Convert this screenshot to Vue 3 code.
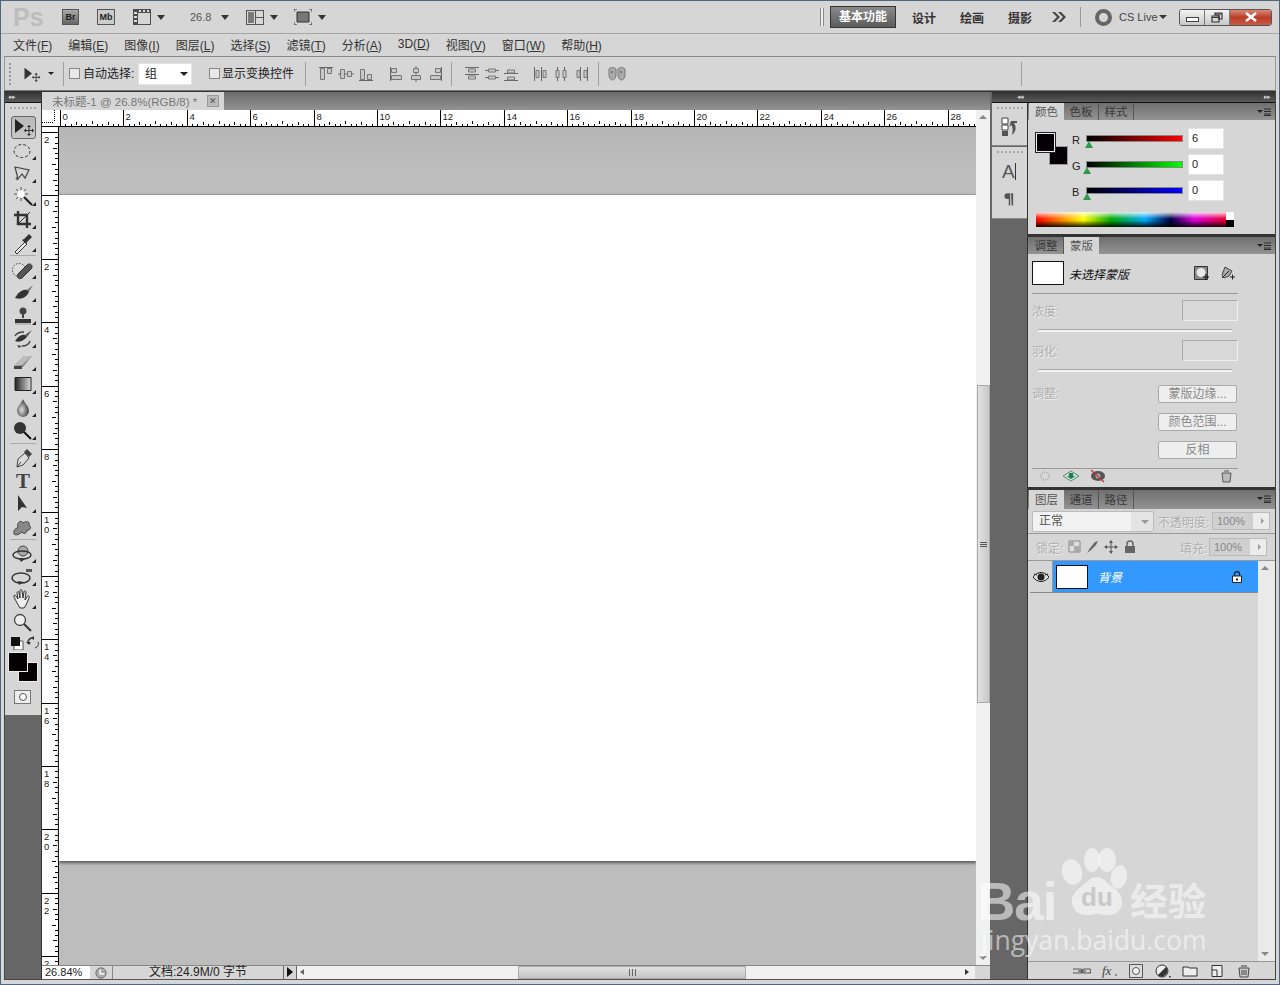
<template>
  <div class="app">
    <!-- title bar -->
    <div class="titlebar">
      <div class="tb-left">
        <span class="ps-logo">Ps</span>
        <span class="br-badge">Br</span>
        <span class="mb-badge">Mb</span>
        <svg width="18" height="16" viewBox="0 0 18 16" v-html="icons.film"></svg>
        <i class="down-arrow"></i>
        <span class="zoom-val">26.8</span>
        <i class="down-arrow"></i>
        <svg width="18" height="15" viewBox="0 0 18 15" v-html="icons.arrange"></svg>
        <i class="down-arrow"></i>
        <svg width="18" height="16" viewBox="0 0 18 16" v-html="icons.screen"></svg>
        <i class="down-arrow"></i>
      </div>
      <div class="tb-right">
        <span class="tb-grip"></span>
        <span class="ws-active">基本功能</span>
        <span class="ws-item">设计</span>
        <span class="ws-item">绘画</span>
        <span class="ws-item">摄影</span>
        <svg width="15" height="12" viewBox="0 0 15 12" v-html="icons.more"></svg>
        <span class="tb-sep"></span>
        <span class="cs-ring"></span>
        <span class="cs-text">CS Live</span>
        <i class="cs-arrow"></i>
        <div class="win-btns">
          <span class="win-btn min"><i></i></span>
          <span class="win-btn restore">
            <svg width="12" height="11" viewBox="0 0 12 11" v-html="icons.restore"></svg>
          </span>
          <span class="win-btn close">
            <svg width="12" height="10" viewBox="0 0 12 10"><path d="M1 1l10 8M11 1L1 9" stroke="#fff" stroke-width="2.6" /></svg>
          </span>
        </div>
      </div>
    </div>

    <!-- menu -->
    <div class="menubar">
      <span v-for="m in menus" :key="m.name">{{ m.name }}(<u>{{ m.key }}</u>)</span>
    </div>

    <!-- options -->
    <div class="optionsbar">
      <span class="opt-grip"></span>
      <svg width="20" height="16" viewBox="0 0 24 19" v-html="icons.move"></svg>
      <i class="small-arrow"></i>
      <span class="opt-sep"></span>
      <span class="check"></span>
      <span class="opt-text">自动选择:</span>
      <span class="opt-select">组<i class="small-arrow dark"></i></span>
      <span class="check"></span>
      <span class="opt-text">显示变换控件</span>
      <span class="opt-sep"></span>
      <svg v-for="(a, i) in alignA" :key="'a' + i" width="16" height="16" viewBox="0 0 16 16" v-html="a"></svg>
      <span class="opt-sep"></span>
      <svg v-for="(a, i) in alignB" :key="'b' + i" width="16" height="16" viewBox="0 0 16 16" v-html="a"></svg>
      <span class="opt-sep"></span>
      <svg width="18" height="16" viewBox="0 0 18 16" v-html="icons.faces"></svg>
      <span class="opt-sep"></span>
    </div>

    <div class="main">
      <!-- tools -->
      <div class="toolcol">
        <div class="dock-head"><span class="dock-arrows">▸▸</span></div>
        <div class="toolbox">
          <div class="tool-grip"></div>
          <template v-for="(t, i) in tools" :key="i">
            <div v-if="t === '-'" class="tool-sep"></div>
            <div v-else class="tool" :class="{ active: t.active, fly: t.fly }">
              <svg width="24" height="22" viewBox="0 0 24 22" v-html="t.svg"></svg>
            </div>
          </template>
          <div class="mini-colors">
            <svg width="32" height="14" viewBox="0 0 32 14" v-html="icons.miniColors"></svg>
          </div>
          <div class="big-colors">
            <span class="big-bg"></span>
            <span class="big-fg"></span>
          </div>
          <div class="quickmask"><span></span></div>
        </div>
        <div class="tool-empty"></div>
      </div>

      <!-- document -->
      <div class="doc">
        <div class="doc-tabs">
          <div class="doc-tab">
            <span>未标题-1 @ 26.8%(RGB/8) *</span>
            <span class="tab-close">✕</span>
          </div>
        </div>
        <div class="ruler-row">
          <svg class="ruler-corner" width="18" height="17" viewBox="0 0 18 17">
            <path d="M0 12.5h12M12.5 0v12" stroke="#000" stroke-dasharray="1 1" fill="none" />
            <path d="M0 16.5h18" stroke="#000" />
          </svg>
          <svg class="ruler-top" width="916" height="17" viewBox="0 0 916 17">
            <path :d="topTicks" stroke="#000" fill="none" shape-rendering="crispEdges" />
            <text v-for="n in topLabels" :key="n.v" :x="n.x + 2" y="10" class="ruler-num">{{ n.v }}</text>
          </svg>
          <div class="ruler-scroll"><i class="arr-up"></i></div>
        </div>
        <div class="doc-mid">
          <svg class="ruler-left" width="17" height="838" viewBox="0 0 17 838">
            <path :d="leftTicks" stroke="#000" fill="none" shape-rendering="crispEdges" />
            <template v-for="n in leftLabels" :key="n.y">
              <text v-for="(d, k) in n.v" :key="k" x="2" :y="n.y + 10 + k * 10" class="ruler-num">{{ d }}</text>
            </template>
          </svg>
          <div class="canvas-wrap">
            <div class="canvas"></div>
          </div>
          <div class="vscroll">
            <div class="vthumb"><span></span></div>
            <i class="arr-down"></i>
          </div>
        </div>
        <div class="statusbar">
          <span class="st-zoom">26.84%</span>
          <span class="st-icon"><svg width="14" height="14" viewBox="0 0 14 14" v-html="icons.stClock"></svg></span>
          <span class="st-text">文档:24.9M/0 字节</span>
          <span class="st-arrow"></span>
          <div class="hscroll">
            <i class="arr-left"></i>
            <div class="hthumb"><span></span></div>
            <i class="arr-right"></i>
          </div>
        </div>
      </div>

      <!-- right dock -->
      <div class="rightdock">
        <div class="dock-head right">
          <span class="dock-arrows">◂◂</span>
          <span class="dock-arrows">▸▸</span>
        </div>
        <div class="dock-body">
          <div class="iconcol">
            <div class="ic-sec first">
              <div class="ic-grip"></div>
              <svg width="20" height="20" viewBox="0 0 20 20" v-html="icons.history"></svg>
            </div>
            <div class="ic-sec second">
              <div class="ic-grip"></div>
              <svg width="20" height="24" viewBox="0 0 20 24" v-html="icons.charA"></svg>
              <svg width="15" height="16" viewBox="0 0 20 22" v-html="icons.para"></svg>
            </div>
          </div>
          <div class="panels">
            <!-- colour -->
            <div class="ptabs">
              <span class="ptab active">颜色</span><span class="ptab">色板</span><span class="ptab">样式</span>
              <svg class="pmenu" width="14" height="8" viewBox="0 0 14 8" v-html="icons.pmenu"></svg>
            </div>
            <div class="color-body">
              <div class="color-grid">
                <div class="swatches">
                  <span class="sw-bg"></span>
                  <span class="sw-fg"></span>
                </div>
                <div class="color-rows">
                  <div v-for="c in channels" :key="c.l" class="color-row">
                    <span class="c-label">{{ c.l }}</span>
                    <div class="c-slider" :class="c.cls">
                      <i class="c-thumb" :style="{ left: c.thumb + 'px' }"></i>
                    </div>
                    <span class="c-input">{{ c.v }}</span>
                  </div>
                </div>
              </div>
              <div class="spectrum"><div class="spectrum-bw"></div></div>
            </div>
            <div class="psep"></div>

            <!-- masks -->
            <div class="ptabs">
              <span class="ptab">调整</span><span class="ptab active">蒙版</span>
              <svg class="pmenu" width="14" height="8" viewBox="0 0 14 8" v-html="icons.pmenu"></svg>
            </div>
            <div class="mask-body">
              <div class="mask-top">
                <span class="mask-thumb"></span>
                <span class="mask-title">未选择蒙版</span>
                <svg class="mask-ic1" width="15" height="15" viewBox="0 0 15 15" v-html="icons.maskPixel"></svg>
                <svg class="mask-ic2" width="15" height="15" viewBox="0 0 15 15" v-html="icons.maskVector"></svg>
              </div>
              <div class="mask-line"></div>
              <div class="mask-row"><span class="ghost">浓度:</span><span class="mask-input"></span></div>
              <div class="mask-track"></div>
              <div class="mask-row second"><span class="ghost">羽化:</span><span class="mask-input"></span></div>
              <div class="mask-track"></div>
              <div class="mask-btn-row first"><span class="ghost raised">调整:</span><span class="mask-btn">蒙版边缘...</span></div>
              <div class="mask-btn-row"><span class="mask-btn">颜色范围...</span></div>
              <div class="mask-btn-row"><span class="mask-btn">反相</span></div>
              <div class="mask-line bottom"></div>
              <div class="mask-foot">
                <svg width="206" height="16" viewBox="0 0 206 16" v-html="icons.maskFoot"></svg>
              </div>
            </div>
            <div class="psep"></div>

            <!-- layers -->
            <div class="ptabs tall">
              <span class="ptab active">图层</span><span class="ptab">通道</span><span class="ptab">路径</span>
              <svg class="pmenu" width="14" height="8" viewBox="0 0 14 8" v-html="icons.pmenu"></svg>
            </div>
            <div class="layers-body">
              <div class="ly-row one">
                <span class="blend">正常<i class="blend-arrow"></i></span>
                <span class="ghost ly-label">不透明度:</span>
                <span class="pct">100%<i></i></span>
              </div>
              <div class="ly-row two">
                <span class="ghost lock-label">锁定:</span>
                <svg class="lock-icons" width="70" height="14" viewBox="0 0 70 14" v-html="icons.lockRow"></svg>
                <span class="ghost fill-label">填充:</span>
                <span class="pct">100%<i></i></span>
              </div>
              <div class="ly-list">
                <div class="ly-items">
                  <div class="ly-item">
                    <span class="eye">
                      <svg width="16" height="12" viewBox="0 0 16 12" v-html="icons.eye"></svg>
                    </span>
                    <div class="ly-sel">
                      <span class="ly-thumb"></span>
                      <span class="ly-name">背景</span>
                      <svg class="ly-lock" width="10" height="12" viewBox="0 0 10 12" v-html="icons.lock"></svg>
                    </div>
                  </div>
                </div>
                <div class="ly-scroll"><i class="arr-up"></i><i class="arr-down"></i></div>
              </div>
              <div class="ly-foot">
                <svg v-for="(f, i) in layerFoot" :key="i" width="18" height="14" viewBox="0 0 18 14" v-html="f"></svg>
              </div>
            </div>
          </div>
        </div>
      </div>
    </div>

    <!-- watermark sits over the panels -->
    <div class="watermark">
      <div class="wm-top">
        <span class="wm-bai">Bai</span>
        <svg class="wm-paw" width="70" height="78" viewBox="0 0 70 78">
          <ellipse cx="12" cy="26" rx="10" ry="13" transform="rotate(-15 12 26)" />
          <ellipse cx="32" cy="14" rx="8" ry="12" />
          <ellipse cx="47" cy="14" rx="9" ry="12" />
          <ellipse cx="59" cy="31" rx="8" ry="12" transform="rotate(12 59 31)" />
          <path d="M37 31c6 0 8 4 13 8 7 5 12 9 12 17 0 9-7 14-16 13-4 0-8-2-11-1-8 2-21 2-23-11-1-7 3-12 9-16 6-4 8-10 16-10z" />
          <text x="37" y="60" class="wm-du">du</text>
        </svg>
        <span class="wm-cn">经验</span>
      </div>
      <div class="wm-url">jingyan.baidu.com</div>
    </div>
  </div>
</template>

<script setup>
const menus = [
  { name: "文件", key: "F" },
  { name: "编辑", key: "E" },
  { name: "图像", key: "I" },
  { name: "图层", key: "L" },
  { name: "选择", key: "S" },
  { name: "滤镜", key: "T" },
  { name: "分析", key: "A" },
  { name: "3D", key: "D" },
  { name: "视图", key: "V" },
  { name: "窗口", key: "W" },
  { name: "帮助", key: "H" },
];

const icons = {
  film: '<path d="M0 0h18v16H0z" fill="#4d4d4d"/><path d="M5 4h12v11H5z" fill="#d6d6d6"/><path d="M1 3h3v2H1zM1 7h3v2H1zM1 11h3v2H1zM6 1h2v2H6zM10 1h2v2h-2zM14 1h2v2h-2z" fill="#ddd"/>',
  arrange: '<path d="M0 0h18v15H0z" fill="#555"/><path d="M1 1h8v13H1zM10 1h7v6h-7zM10 8h7v6h-7z" fill="#d8d8d8"/><path d="M2 2h6v11H2z" fill="#7a7a7a"/>',
  screen: '<path d="M3 3h12v10H3z" fill="#777" stroke="#333"/><path d="M0 3V0h3M15 0h3v3M18 13v3h-3M3 16H0v-3" fill="none" stroke="#333"/>',
  more: '<path d="M1 1l5 5-5 5h3l5-5-5-5zM7 1l5 5-5 5h3l5-5-5-5z" fill="#444"/>',
  restore: '<path d="M4 1h7v6H8V3H4z" fill="none" stroke="#333" stroke-width="1.2"/><path d="M1 4h7v6H1z" fill="none" stroke="#333" stroke-width="1.2"/><path d="M1 5.5h7M4 2h7" stroke="#333"/>',
  move: '<path d="M3 2v14l9-7z" fill="#333"/><path d="M17 9v9M13 13.5h8" stroke="#333"/><path d="M17 8l-2 2h4zM17 19l-2-2h4zM12 13.5l2-2v4zM22 13.5l-2-2v4z" fill="#333"/>',
  faces: '<path d="M1 3c2-2 5-2 7 0v6c0 3-2 5-3.500 5S1 12 1 9zM10 3c2-2 5-2 7 0v6c0 3-2 5-3.500 5S10 12 10 9z" fill="#aaa" stroke="#777"/><path d="M3 6h2M12 6h2" stroke="#444"/>',
  miniColors: '<path d="M6 5h9v9H6z" fill="#fff" stroke="#555"/><path d="M3 1h9v9H3z" fill="#111"/><path d="M25 2c-3 0-5 2-5 5" fill="none" stroke="#333" stroke-width="1.500"/><path d="M21 9l-3-3h5z" fill="#333"/><path d="M27 12c3-1 4-4 3-6" fill="none" stroke="#333"/><path d="M23 2l3-2v4z" fill="#333"/>',
  stClock: '<circle cx="7" cy="7" r="6" fill="#aaa" stroke="#666"/><path d="M7 3v4h4v2H5V3z" fill="#eee"/>',
  history: '<path d="M2 2h6v6H2z" fill="#fff" stroke="#444"/><path d="M2 9h6v5H2z" fill="#fff" stroke="#444"/><path d="M2 15h6v5H2z" fill="#555"/><path d="M11 5h6v2h-3c2 3 3 8-2 12 1-5 1-8-1-10l-2 2z" fill="#555"/>',
  charA: '<text x="2" y="19" font-size="19" fill="#555" font-family="Liberation Sans">A</text><path d="M15.500 4v17" stroke="#333"/>',
  para: '<path d="M9 3H7a4 4 0 0 0 0 8h2v9h2V3zM12 3h3v17h-2z" fill="#555"/>',
  pmenu: '<path d="M0 2h6L3 5z" fill="#222"/><path d="M7 1h7M7 3.500h7M7 6h7M7 7.500h7" stroke="#222" stroke-width=".9"/>',
  maskPixel: '<path d="M.5.500h13v13H.5z" fill="#888" stroke="#333"/><circle cx="7" cy="6.500" r="4.500" fill="#e8e8e8"/><path d="M9 11h6M12 8v6" stroke="#111"/>',
  maskVector: '<path d="M5 1l-3 8 2 3 5-2 3-5z" fill="#aaa" stroke="#444"/><path d="M2 12L9 5" stroke="#222"/><path d="M10 11h5M12.500 8.500v5" stroke="#222"/>',
  maskFoot: '<circle cx="13" cy="7" r="4" fill="none" stroke="#777" stroke-dasharray="1 1.500"/><path d="M31 7l8-5 8 5-8 5z" fill="#bfe0cf" stroke="#6c8c7c"/><path d="M37 4h4v3h2l-4 3-4-3h2z" fill="#1d7a56"/><ellipse cx="66" cy="7" rx="7" ry="5" fill="#555"/><circle cx="66" cy="7" r="2.500" fill="#aaa"/><path d="M59 1l13 12" stroke="#c33" stroke-width="1.200"/><path d="M190 4h9l-1 9h-7zM192 2h5" fill="#bbb" stroke="#555"/>',
  lockRow: '<path d="M1 1h11v11H1z" fill="#ddd" stroke="#888"/><path d="M1 1h5v5H1zM6 6h6v6H6z" fill="#aaa"/><path d="M19 13l3-5 5-6 3-1-2 4-5 5z" fill="#666"/><path d="M43 1v12M37 7h12" stroke="#555"/><path d="M43 0l-2 3h4zM43 14l-2-3h4zM36 7l3-2v4zM50 7l-3-2v4z" fill="#555"/><path d="M57 6h10v7H57z" fill="#666"/><path d="M59 6V4a3 3 0 0 1 6 0v2" fill="none" stroke="#666" stroke-width="1.500"/>',
  eye: '<path d="M0 6c4-6 12-6 16 0-4 6-12 6-16 0z" fill="#ddd" stroke="#222"/><circle cx="8" cy="6" r="3.500" fill="#222"/><path d="M1 3l3 1M15 3l-3 1" stroke="#222"/>',
  lock: '<path d="M.5 5h9v6.500h-9z" fill="#fff" stroke="#222"/><path d="M2.500 5V3a2.500 2.500 0 0 1 5 0v2" fill="none" stroke="#222" stroke-width="1.300"/><path d="M4 7.500h2v2H4z" fill="#222"/>',
};

const bar = (d) => `<path d="${d}" fill="#c8c8c8" stroke="#777"/>`;
const line = (d) => `<path d="${d}" stroke="#666" fill="none"/>`;
const alignA = [
  line("M1 1.500h14") + bar("M2.500 2.500h4v11h-4zM9.500 2.500h4v5h-4z"),
  line("M0 8h16") + bar("M2.500 3.500h4v9h-4zM9.500 5.500h4v5h-4z"),
  line("M1 14.500h14") + bar("M2.500 3.500h4v10h-4zM9.500 8.500h4v5h-4z"),
  line("M2.500 1v14") + bar("M3.500 2.500h5v4h-5zM3.500 9.500h10v4h-10z"),
  line("M8 0v16") + bar("M5.500 2.500h5v4h-5zM3.500 9.500h9v4h-9z"),
  line("M13.500 1v14") + bar("M7.500 2.500h5v4h-5zM2.500 9.500h10v4h-10z"),
];
const alignB = [
  line("M1 1.500h14M1 8.500h14") + bar("M4.500 3h7v3h-7zM4.500 10h7v3h-7z"),
  line("M1 4.500h14M1 11.500h14") + bar("M4.500 3h7v3h-7zM4.500 10h7v3h-7z"),
  line("M1 7.500h14M1 14.500h14") + bar("M4.500 4h7v3h-7zM4.500 11h7v3h-7z"),
  line("M1.500 1v14M8.500 1v14") + bar("M3 4.500h3v7H3zM10 4.500h3v7h-3z"),
  line("M4.500 1v14M11.500 1v14") + bar("M3 4.500h3v7H3zM10 4.500h3v7h-3z"),
  line("M7.500 1v14M14.500 1v14") + bar("M4 4.500h3v7H4zM11 4.500h3v7h-3z"),
];

const layerFoot = [
  '<path d="M1 5h6a2 2 0 0 1 0 4H1a2 2 0 0 1 0-4zM11 5h5a2 2 0 0 1 0 4h-5a2 2 0 0 1 0-4z" fill="none" stroke="#555" stroke-width="1.200"/><path d="M5 7h8" stroke="#555" stroke-width="1.200"/>',
  '<text x="2" y="11" font-size="13" font-style="italic" font-family="Liberation Serif" fill="#444">fx</text><path d="M15 11h2" stroke="#444"/>',
  '<path d="M2.500 .5h13v13h-13z" fill="#ddd" stroke="#555"/><circle cx="9" cy="7" r="3.500" fill="#fff" stroke="#555"/>',
  '<circle cx="8" cy="7" r="6" fill="#eee" stroke="#333"/><path d="M12.200 2.800A6 6 0 0 1 3.800 11.200z" fill="#333"/><path d="M15 12l2 0-1 2z" fill="#222"/>',
  '<path d="M2 3h5l1 1h8v8H2z" fill="#eee" stroke="#333"/>',
  '<path d="M4 1.500h10v11H4z" fill="#eee" stroke="#333"/><path d="M4 6h5v6" fill="none" stroke="#333"/>',
  '<path d="M4 4h10l-1 9H5zM6 2h6" fill="#ccc" stroke="#444"/><path d="M7 6v5M9 6v5M11 6v5" stroke="#444"/>',
];

const t = (svg, fly = true, active = false) => ({ svg, fly, active });
const tools = [
  t(icons.move.replace(/fill="#333"/g, 'fill="#222"'), false, true),
  t('<ellipse cx="11" cy="11" rx="8" ry="6.500" fill="none" stroke="#333" stroke-dasharray="3 2"/>'),
  t('<path d="M4 4l14 3-4 8-3-4-4 5z" fill="none" stroke="#444" stroke-width="1.200"/><path d="M6 14c-2 2 0 4 1 2" fill="none" stroke="#444"/>'),
  t('<circle cx="10" cy="8" r="3.500" fill="#fff"/><path d="M10 1v3M10 12v3M3 8h3M14 8h3M5 3l2 2M15 3l-2 2M5 13l2-2" stroke="#555"/><path d="M13 11l8 8" stroke="#222" stroke-width="2.200"/>'),
  t('<path d="M7 2v13h13M3 6h13v13" fill="none" stroke="#333" stroke-width="2.400"/><path d="M7 15L19 3" stroke="#333"/>'),
  t('<path d="M4 20l10-10 2 2-10 10z" fill="#eee" stroke="#333"/><path d="M13 7l5-5 3 3-5 5-1 2-4-4z" fill="#333"/>'),
  "-",
  t('<circle cx="8" cy="11" r="6.500" fill="#ddd" stroke="#444" stroke-dasharray="1.500 1.500"/><path d="M7 15l9-9c3-3 7 1 4 4l-9 9c-3 2-6-1-4-4z" fill="#555" stroke="#333"/>'),
  t('<path d="M16 8l6-5-4 7z" fill="#777"/><path d="M16 8c-5-1-9 3-12 8 6 2 11 0 14-6z" fill="#333"/>'),
  t('<circle cx="12" cy="6" r="3.500" fill="#444"/><path d="M11 8h2v5h-2z" fill="#444"/><path d="M4 14h16v4H4z" fill="#333"/><path d="M4 19h16" stroke="#999"/>'),
  t('<path d="M14 7l7-5-5 7z" fill="#555"/><path d="M14 7c-4-1-7 2-10 6 4 2 8 0 12-4z" fill="#333"/><path d="M4 8c2-4 6-4 9-4M19 13c-1 3-4 5-8 5" fill="none" stroke="#444" stroke-width="1.400"/><path d="M6 17l5 1-3 2z" fill="#444"/>'),
  t('<path d="M3 15l10-10h8l-9 11H4z" fill="#888"/><path d="M3 15l10-10h8L11 14z" fill="#bbb"/><path d="M3 15h8v3H3z" fill="#444"/>'),
  t('<defs><linearGradient id="tg"><stop offset="0" stop-color="#222"/><stop offset="1" stop-color="#ddd"/></linearGradient></defs><path d="M4 3.500h16v13H4z" fill="url(#tg)" stroke="#222"/>'),
  t('<defs><radialGradient id="td" cx=".4" cy=".6"><stop offset="0" stop-color="#ddd"/><stop offset="1" stop-color="#555"/></radialGradient></defs><path d="M12 2c2 5 6 7 6 12a6 6 0 0 1-12 0c0-5 4-7 6-12z" fill="url(#td)"/>'),
  t('<circle cx="9" cy="8" r="6" fill="#333"/><path d="M13 12l7 7" stroke="#111" stroke-width="2"/>'),
  "-",
  t('<path d="M6 20l1-8 7-6 4 5-6 7z" fill="#ddd" stroke="#444"/><path d="M13 5l3-3 5 5-3 3z" fill="#444"/><path d="M6 20l4-5" stroke="#444"/>'),
  t('<text x="12" y="18" font-size="21" font-weight="bold" text-anchor="middle" font-family="Liberation Serif" fill="#444">T</text>'),
  t('<path d="M7 2v16l4-4 5 1z" fill="#333"/>'),
  t('<path d="M3 18c-1-4 2-6 4-6-2-5 3-9 5-5 3-2 7-2 6 2 3 2 1 6-2 5 0 3-3 5-5 2-2 2-6 4-8 2z" fill="#888" stroke="#444"/>'),
  "-",
  t('<circle cx="12" cy="8" r="5" fill="#aaa" stroke="#444"/><ellipse cx="11" cy="12" rx="9" ry="4" fill="none" stroke="#333" stroke-width="1.400"/><path d="M8 15l6 1-4 3z" fill="#333"/>'),
  t('<ellipse cx="10" cy="12" rx="9" ry="5" fill="none" stroke="#333" stroke-width="1.500"/><path d="M7 15l6 1-5 3z" fill="#333"/><path d="M15 3h6v3h-6z" fill="#555"/>'),
  t('<path d="M5 12L3 8c-1-2 1-2 2-1l2 3-1-6c0-2 2-2 2 0l1 5 0-7c0-2 2-2 2 0l1 7 1-6c0-2 2-1 2 0l-1 8 2-3c1-2 3-1 2 1l-3 7-2 3H9z" fill="#eee" stroke="#333"/>'),
  t('<circle cx="9" cy="8" r="5.500" fill="#eee" stroke="#444" stroke-width="1.300"/><path d="M13 12l7 7" stroke="#333" stroke-width="2"/>', false),
];

const channels = [
  { l: "R", v: "6", cls: "red", thumb: -2 },
  { l: "G", v: "0", cls: "green", thumb: -4 },
  { l: "B", v: "0", cls: "blue", thumb: -4 },
];

// ruler ticks: 2 units = 63.4px, split in 12
const step = 63.4;
let top = "M0 16.500h916";
const topLabels = [];
for (let i = 0; i < 15; i++) {
  const x = Math.round(i * step) + 0.5;
  top += `M${x} 0v17`;
  topLabels.push({ v: i * 2, x });
  for (let k = 1; k < 12; k++) {
    const mx = Math.round((i + k / 12) * step) + 0.5;
    top += `M${mx} ${k === 6 ? 11 : k % 3 === 0 ? 12 : 14}v3`;
  }
}
const topTicks = top;

let left = "M16.500 0v838";
const leftLabels = [];
for (let i = 0; i < 14; i++) {
  const y = Math.round(5 + i * step) + 0.5;
  left += `M0 ${y}h17`;
  const v = i === 0 ? 2 : (i - 1) * 2;
  // the last label runs under the status bar: only its first digit shows
  const digits = String(v).split("");
  leftLabels.push({ v: i === 13 ? digits.slice(0, 1) : digits, y });
  for (let k = 1; k < 12; k++) {
    const my = Math.round(5 + (i + k / 12) * step) + 0.5;
    if (my < 838) left += `M${k === 6 ? 10 : k % 3 === 0 ? 11 : 13} ${my}h4`;
  }
}
const leftTicks = left;
</script>

<style>
html,
body {
  margin: 0;
  background: #d6d6d6;
}
</style>

<style scoped>
.app {
  position: relative;
  width: 1280px;
  height: 985px;
  box-sizing: border-box;
  border: 1px solid #50667e;
  background: #d6d6d6;
  display: flex;
  flex-direction: column;
  overflow: hidden;
  font-family: "Liberation Sans", "Noto Sans CJK SC", sans-serif;
  font-size: 12px;
  color: #222;
}
svg {
  display: block;
}

/* title bar */
.titlebar {
  height: 33px;
  box-sizing: border-box;
  flex: none;
  display: flex;
  justify-content: space-between;
  align-items: center;
  padding: 0 7px 0 12px;
  border-bottom: 1px solid #a6a6a6;
}
.tb-left {
  display: grid;
  grid-template-columns: 49px 35px 36px 24px 33px 31px 25px 24px 24px 24px 8px;
  align-items: center;
}
.tb-right {
  display: grid;
  grid-template-columns: 10px 82px 48px 48px 43px 29px 15px 24px 40px 20px 93px;
  align-items: center;
}
.ps-logo {
  font-size: 25px;
  font-weight: bold;
  color: #bdbdbd;
}
.br-badge,
.mb-badge {
  width: 17px;
  height: 16px;
  box-sizing: border-box;
  border: 1px solid #555;
  font-size: 9px;
  font-weight: bold;
  text-align: center;
  line-height: 14px;
}
.br-badge {
  background: linear-gradient(#aaa, #666);
  color: #222;
}
.mb-badge {
  width: 18px;
  background: #ccc;
}
.down-arrow {
  width: 0;
  height: 0;
  border: 4px solid transparent;
  border-top: 5px solid #333;
  border-bottom: 0;
}
.zoom-val {
  color: #555;
  font-size: 11px;
}
.tb-grip {
  width: 4px;
  height: 18px;
  box-sizing: border-box;
  border-left: 1px solid #888;
  border-right: 1px solid #888;
  background: #f2f2f2;
}
.ws-active {
  width: 66px;
  height: 22px;
  box-sizing: border-box;
  border: 1px solid #333;
  background: linear-gradient(#8a8a8a, #5c5c5c);
  color: #fff;
  font-weight: bold;
  line-height: 20px;
  text-align: center;
}
.ws-item {
  font-weight: bold;
  color: #333;
}
.tb-sep {
  width: 1px;
  height: 20px;
  background: #999;
}
.cs-ring {
  width: 17px;
  height: 17px;
  box-sizing: border-box;
  border: 4px solid #666;
  border-radius: 50%;
  background: #d6d6d6;
}
.cs-text {
  font-size: 11px;
  color: #444;
  white-space: nowrap;
}
.cs-arrow {
  width: 0;
  height: 0;
  border: 4px solid transparent;
  border-top: 4px solid #333;
  border-bottom: 0;
}
.win-btns {
  display: flex;
  height: 17px;
  border: 1px solid #555;
  border-radius: 3px;
  overflow: hidden;
  box-sizing: border-box;
}
.win-btn {
  display: flex;
  align-items: center;
  justify-content: center;
  background: linear-gradient(#f4f4f4, #c8c8c8);
  border-right: 1px solid #777;
  box-sizing: border-box;
}
.win-btn.min {
  width: 25px;
}
.win-btn.min i {
  width: 11px;
  height: 3px;
  margin-top: 4px;
  background: #fff;
  border: 1px solid #444;
}
.win-btn.restore {
  width: 25px;
}
.win-btn.close {
  flex: 1;
  border-right: 0;
  background: linear-gradient(#d98878, #bb3d27 50%, #c85a45);
}

/* menu */
.menubar {
  height: 22px;
  box-sizing: border-box;
  flex: none;
  display: flex;
  gap: 16px;
  align-items: center;
  padding: 0 0 2px 12px;
  color: #333;
}

/* options */
.optionsbar {
  height: 35px;
  box-sizing: border-box;
  flex: none;
  margin: 0 3px;
  padding-left: 4px;
  border: 1px solid #999;
  border-top-color: #888;
  border-bottom: 1px solid #777;
  display: grid;
  grid-template-columns: 13px 26px 15px 6px 14px 55px 71px 13px 83px 13px 20px 20px 30px 20px 20px 23px 13px 20px 19px 30px 20px 20px 25px 10px 413px 1px;
  align-items: center;
  color: #222;
}
.opt-grip {
  width: 2px;
  height: 22px;
  border-left: 2px dotted #999;
}
.opt-sep {
  width: 1px;
  height: 24px;
  background: #a0a0a0;
}
.opt-text {
  padding-bottom: 3px;
}
.check {
  width: 9px;
  height: 9px;
  border: 1px solid #888;
  background: #e8e8e8;
}
.small-arrow {
  width: 0;
  height: 0;
  border: 3px solid transparent;
  border-top: 3px solid #222;
  border-bottom: 0;
}
.opt-select {
  width: 54px;
  height: 22px;
  box-sizing: border-box;
  background: #fff;
  border: 1px solid #e4e4e4;
  padding: 1px 0 0 6px;
  line-height: 22px;
  display: flex;
  justify-content: space-between;
  align-items: center;
}
.opt-select .small-arrow.dark {
  margin-right: 3px;
  border-width: 4px;
  border-bottom: 0;
}

/* main */
.main {
  flex: none;
  height: 889px;
  box-sizing: border-box;
  margin: 0 3px;
  border: 1px solid #444;
  border-top-color: #333;
  display: flex;
  background: #666;
}
.dock-head {
  height: 10px;
  background: linear-gradient(#333, #5a5a5a);
  border-bottom: 1px solid #111;
  display: flex;
  align-items: center;
  padding: 0 4px;
}
.dock-head.right {
  justify-content: space-between;
  padding: 0 5px 0 25px;
}
.dock-arrows {
  font-size: 7px;
  color: #ccc;
  letter-spacing: -1px;
  line-height: 10px;
}

/* tools */
.toolcol {
  width: 37px;
  flex: none;
  display: flex;
  flex-direction: column;
  border-right: 1px solid #333;
  box-sizing: border-box;
}
.toolbox {
  height: 612px;
  flex: none;
  background: #d6d6d6;
  display: flex;
  flex-direction: column;
}
.tool-empty {
  flex: 1;
  background: #666;
}
.tool-grip {
  height: 5px;
  margin: 4px 5px;
  border-top: 2px dotted #aaa;
  box-sizing: border-box;
}
.tool {
  position: relative;
  height: 23px;
  flex: none;
  display: flex;
  justify-content: center;
  align-items: center;
}
.tool.active {
  margin: 0 5px 0 6px;
  box-sizing: border-box;
  border: 1px solid #666;
  border-radius: 3px;
  background: linear-gradient(#b8b8b8, #c8c8c8);
}
.tool.active svg {
  flex: none;
}
.tool.fly::after {
  content: "";
  position: absolute;
  right: 5px;
  bottom: 2px;
  border: 2px solid #222;
  border-left-color: transparent;
  border-top-color: transparent;
}
.tool-sep {
  height: 1px;
  margin: 1px 5px 2px;
  background: #aaa;
  flex: none;
}
.mini-colors {
  height: 17px;
  padding: 2px 0 0 3px;
  box-sizing: border-box;
  flex: none;
}
.big-colors {
  position: relative;
  height: 34px;
  flex: none;
}
.big-fg,
.big-bg {
  position: absolute;
  width: 18px;
  height: 18px;
  background: #050103;
  border: 1px solid #eee;
}
.big-fg {
  left: 3px;
  top: 1px;
}
.big-bg {
  left: 13px;
  top: 11px;
}
.quickmask {
  height: 14px;
  margin: 5px 0 0 9px;
  width: 17px;
  box-sizing: border-box;
  border: 1px solid #777;
  background: #eee;
  display: flex;
  align-items: center;
  justify-content: center;
}
.quickmask span {
  width: 8px;
  height: 8px;
  box-sizing: border-box;
  border: 1px solid #555;
  border-radius: 50%;
  background: #fff;
}

/* doc */
.doc {
  width: 948px;
  flex: none;
  display: flex;
  flex-direction: column;
}
.doc-tabs {
  height: 18px;
  flex: none;
  background: linear-gradient(#6b6b6b, #929292);
}
.doc-tab {
  width: 182px;
  height: 18px;
  box-sizing: border-box;
  background: #d6d6d6;
  padding-left: 10px;
  display: flex;
  justify-content: space-between;
  align-items: center;
  color: #777;
  font-size: 11.500px;
  white-space: nowrap;
}
.tab-close {
  width: 12px;
  height: 12px;
  margin-right: 5px;
  border: 1px solid #999;
  background: #bbb;
  color: #555;
  font-size: 9px;
  line-height: 11px;
  text-align: center;
  box-sizing: border-box;
}
.ruler-row {
  height: 17px;
  flex: none;
  display: flex;
  background: #fff;
}
.ruler-corner,
.ruler-top {
  flex: none;
}
.ruler-scroll {
  position: relative;
  flex: 1;
  background: #f0f0f0;
}
.ruler-num {
  font-size: 9.500px;
  font-family: "Liberation Sans", sans-serif;
  fill: #222;
}
.doc-mid {
  height: 838px;
  flex: none;
  display: flex;
}
.ruler-left {
  flex: none;
  background: #fff;
}
.canvas-wrap {
  width: 917px;
  flex: none;
  background: linear-gradient(#b5b5b5, #bdbdbd 40px);
  padding-top: 67px;
  box-sizing: border-box;
}
.canvas {
  height: 667px;
  background: #fff;
  border-top: 1px solid #9a9a9a;
  box-sizing: border-box;
  box-shadow: 0 2px 3px #555;
}
.vscroll {
  width: 14px;
  flex: none;
  background: #f0f0f0;
  position: relative;
  box-sizing: border-box;
  padding-top: 258px;
}
.vthumb {
  margin-left: 1px;
  height: 318px;
  background: linear-gradient(90deg, #e2e2e2, #c8c8c8);
  border: 1px solid #aaa;
  box-sizing: border-box;
  display: flex;
  align-items: center;
  justify-content: center;
}
.vthumb span {
  width: 7px;
  height: 5px;
  border-top: 1px solid #555;
  border-bottom: 1px solid #555;
  box-sizing: border-box;
  background: linear-gradient(transparent 1px, #555 1px, #555 2px, transparent 2px);
}
.arr-up,
.arr-down {
  position: absolute;
  left: 3px;
  width: 0;
  height: 0;
  border: 4px solid transparent;
}
.arr-up {
  top: 5px;
  border-top: 0;
  border-bottom: 4px solid #888;
}
.arr-down {
  bottom: 5px;
  border-bottom: 0;
  border-top: 4px solid #888;
}
.statusbar {
  height: 15px;
  flex: none;
  display: flex;
  background: #d6d6d6;
  box-sizing: border-box;
  border-top: 1px solid #888;
  border-bottom: 1px solid #555;
}
.st-zoom {
  width: 48px;
  background: #fff;
  box-sizing: border-box;
  padding-left: 3px;
  font-size: 11px;
  line-height: 13px;
  flex: none;
}
.st-icon {
  width: 23px;
  flex: none;
  box-sizing: border-box;
  border-right: 1px solid #888;
  display: flex;
  align-items: center;
  justify-content: center;
}
.st-icon svg {
  width: 12px;
  height: 12px;
}
.st-text {
  width: 171px;
  flex: none;
  text-align: center;
  line-height: 13px;
  box-sizing: border-box;
  border-right: 1px solid #666;
}
.st-arrow {
  width: 13px;
  flex: none;
  box-sizing: border-box;
  border-right: 1px solid #666;
  position: relative;
}
.st-arrow::after {
  content: "";
  position: absolute;
  left: 3px;
  top: 1px;
  border: 5px solid transparent;
  border-left: 6px solid #111;
  border-right: 0;
}
.hscroll {
  width: 678px;
  flex: none;
  display: flex;
  position: relative;
  background: #f0f0f0;
}
.hthumb {
  margin-left: 221px;
  width: 228px;
  background: linear-gradient(#e2e2e2, #c4c4c4);
  border: 1px solid #aaa;
  box-sizing: border-box;
  display: flex;
  justify-content: center;
  align-items: center;
}
.hthumb span {
  width: 7px;
  height: 7px;
  box-sizing: border-box;
  border-left: 1px solid #666;
  border-right: 1px solid #666;
  background: linear-gradient(90deg, transparent 2px, #666 2px, #666 3px, transparent 3px);
}
.arr-left,
.arr-right {
  position: absolute;
  top: 3px;
  border: 3.500px solid transparent;
}
.arr-left {
  left: 3px;
  border-left: 0;
  border-right: 4px solid #666;
}
.arr-right {
  right: 6px;
  border-right: 0;
  border-left: 4px solid #333;
}

/* right dock */
.rightdock {
  width: 283px;
  flex: none;
  margin-left: 2px;
  display: flex;
  flex-direction: column;
}
.dock-body {
  flex: 1;
  display: flex;
  min-height: 0;
}
.iconcol {
  width: 36px;
  flex: none;
  background: #666;
  border-right: 1px solid #333;
  box-sizing: border-box;
}
.ic-sec {
  background: #d6d6d6;
  border-bottom: 1px solid #888;
  margin-bottom: 1px;
  display: flex;
  flex-direction: column;
  align-items: center;
  box-sizing: border-box;
}
.ic-sec.first {
  height: 43px;
}
.ic-sec.second {
  height: 72px;
}
.ic-grip {
  width: 26px;
  height: 4px;
  margin: 4px 0;
  border-top: 2px dotted #aaa;
  box-sizing: border-box;
}
.ic-sec.first svg {
  margin-top: 1px;
}
.ic-sec.second svg + svg {
  margin-top: 8px;
}
.panels {
  width: 247px;
  flex: none;
  background: #d6d6d6;
  display: flex;
  flex-direction: column;
}
.ptabs {
  position: relative;
  height: 17px;
  flex: none;
  padding-left: 1px;
  display: flex;
  background: linear-gradient(#6f6f6f, #939393);
}
.ptabs.tall {
  height: 19px;
}
.ptab {
  width: 35px;
  box-sizing: border-box;
  text-align: center;
  font-size: 11.500px;
  line-height: 18px;
  color: #383838;
  border-right: 1px solid #555;
}
.ptabs.tall .ptab {
  line-height: 20px;
}
.ptab.active {
  background: #d6d6d6;
  color: #555;
  border-right: 0;
}
.pmenu {
  position: absolute;
  right: 4px;
  top: 5px;
}
.psep {
  height: 3px;
  flex: none;
  background: #333;
}

/* colour */
.color-body {
  height: 114px;
  flex: none;
  box-sizing: border-box;
  padding: 8px 0 0 8px;
}
.color-grid {
  display: flex;
}
.swatches {
  position: relative;
  width: 36px;
  height: 32px;
  flex: none;
  margin-top: 5px;
}
.sw-fg,
.sw-bg {
  position: absolute;
  width: 17px;
  height: 17px;
  background: #050003;
}
.sw-fg {
  left: 0;
  top: 0;
  border: 1px solid #eee;
  outline: 1px solid #222;
}
.sw-bg {
  left: 13px;
  top: 13px;
  border: 1px solid #999;
}
.color-rows {
  display: flex;
  flex-direction: column;
  gap: 5px;
}
.color-row {
  display: flex;
  align-items: center;
  height: 21px;
}
.c-label {
  width: 14px;
  font-size: 11px;
  padding-top: 2px;
}
.c-slider {
  position: relative;
  width: 97px;
  height: 7px;
  box-sizing: border-box;
  border: 1px solid #888;
}
.c-slider.red {
  background: linear-gradient(90deg, #000, #f00);
}
.c-slider.green {
  background: linear-gradient(90deg, #000, #0f0);
}
.c-slider.blue {
  background: linear-gradient(90deg, #000, #00f);
}
.c-thumb {
  position: absolute;
  top: 5px;
  width: 0;
  height: 0;
  border: 4px solid transparent;
  border-top: 0;
  border-bottom: 7px solid #2c9a4a;
}
.c-input {
  width: 36px;
  height: 21px;
  margin-left: 5px;
  box-sizing: border-box;
  background: #fff;
  border: 1px solid #e4e4e4;
  padding-left: 3px;
  font-size: 11px;
  line-height: 18px;
}
.spectrum {
  width: 198px;
  height: 15px;
  margin-top: 11px;
  display: flex;
  justify-content: flex-end;
  background:
    linear-gradient(rgba(255, 255, 255, 0.85), transparent 45%, transparent 55%, rgba(0, 0, 0, 0.9)),
    linear-gradient(90deg, #f00, #ff0 24%, #0a0 38%, #0af 55%, #004 68%, #d0d 80%, #e00 100%);
}
.spectrum-bw {
  width: 8px;
  background: linear-gradient(#fff 50%, #000 50%);
}

/* masks */
.mask-body {
  height: 233px;
  flex: none;
  box-sizing: border-box;
  padding: 7px 0 0 4px;
  width: 210px;
}
.mask-top {
  display: flex;
  align-items: center;
  height: 24px;
}
.mask-thumb {
  width: 32px;
  height: 24px;
  box-sizing: border-box;
  background: #fff;
  border: 1px solid #111;
  flex: none;
}
.mask-title {
  margin-left: 5px;
  width: 125px;
  flex: none;
  font-style: italic;
  color: #111;
}
.mask-ic2 {
  margin-left: 11px;
}
.mask-line {
  height: 1px;
  background: #999;
  margin-top: 8px;
}
.mask-line.bottom {
  margin-top: 9px;
}
.mask-row {
  display: flex;
  justify-content: space-between;
  align-items: center;
  margin-top: 6px;
  height: 21px;
}
.mask-row.second {
  margin-top: 8px;
}
.ghost {
  color: #b0b0b0;
  text-shadow: 1px 1px 0 #eee;
}
.ghost.raised {
  padding-bottom: 4px;
}
.mask-input {
  width: 56px;
  height: 21px;
  box-sizing: border-box;
  border: 1px solid #aaa;
  border-right-color: #eee;
  border-bottom-color: #eee;
  background: #d8d8d8;
}
.mask-track {
  width: 194px;
  height: 3px;
  margin: 8px 0 0 6px;
  box-sizing: border-box;
  background: #f2f2f2;
  border-top: 1px solid #aaa;
}
.mask-btn-row {
  display: flex;
  justify-content: space-between;
  height: 18px;
  margin-top: 10px;
  align-items: center;
  padding-right: 1px;
}
.mask-btn-row.first {
  margin-top: 13px;
}
.mask-btn {
  width: 79px;
  height: 18px;
  margin-left: auto;
  box-sizing: border-box;
  border: 1px solid #aaa;
  border-radius: 2px;
  background: #eeeeee;
  color: #8a8a8a;
  text-align: center;
  line-height: 16px;
}
.mask-foot {
  height: 16px;
}

/* layers */
.layers-body {
  flex: 1;
  display: flex;
  flex-direction: column;
  min-height: 0;
}
.ly-row {
  display: flex;
  align-items: center;
  box-sizing: border-box;
  border-bottom: 1px solid #999;
}
.ly-row.one {
  height: 25px;
  padding: 1px 5px 1px 4px;
}
.ly-row.two {
  height: 27px;
  padding: 0 5px 0 8px;
}
.blend {
  width: 122px;
  height: 21px;
  box-sizing: border-box;
  flex: none;
  background: #f2f2f2;
  border: 1px solid #bbb;
  border-radius: 2px;
  padding-left: 6px;
  line-height: 19px;
  color: #555;
  position: relative;
  box-shadow: inset -22px 0 0 #e4e4e4;
}
.blend-arrow {
  position: absolute;
  right: 4px;
  top: 8px;
  border: 4px solid transparent;
  border-top: 4px solid #999;
  border-bottom: 0;
}
.ly-label {
  margin-left: 4px;
  width: 54px;
  flex: none;
}
.pct {
  position: relative;
  width: 58px;
  height: 18px;
  box-sizing: border-box;
  flex: none;
  border: 1px solid #bbb;
  background: linear-gradient(90deg, #d0d0d0 72%, #ececec 72%);
  color: #888;
  font-size: 11px;
  line-height: 16px;
  padding-left: 4px;
}
.pct i {
  position: absolute;
  right: 5px;
  top: 5px;
  border: 3px solid transparent;
  border-left: 3px solid #999;
  border-right: 0;
}
.lock-label {
  width: 32px;
  flex: none;
}
.lock-icons {
  flex: none;
}
.fill-label {
  margin-left: 42px;
  width: 29px;
  flex: none;
  white-space: nowrap;
}
.ly-list {
  flex: 1;
  display: flex;
  min-height: 0;
}
.ly-items {
  width: 230px;
  flex: none;
  padding-left: 2px;
  box-sizing: border-box;
}
.ly-item {
  height: 32px;
  display: flex;
  box-sizing: border-box;
  border-bottom: 1px solid #888;
}
.eye {
  width: 23px;
  flex: none;
  display: flex;
  align-items: center;
  justify-content: center;
  border-right: 1px solid #999;
  box-sizing: border-box;
}
.ly-sel {
  flex: 1;
  display: flex;
  align-items: center;
  background: #3399ff;
  padding-left: 3px;
}
.ly-thumb {
  width: 32px;
  height: 24px;
  flex: none;
  box-sizing: border-box;
  background: #fff;
  border: 1px solid #111;
}
.ly-name {
  margin-left: 10px;
  width: 134px;
  flex: none;
  font-style: italic;
  color: #fff;
}
.ly-lock {
  flex: none;
}
.ly-scroll {
  position: relative;
  flex: 1;
  background: #eaeaea;
}
.ly-foot {
  height: 18px;
  flex: none;
  box-sizing: border-box;
  border-top: 1px solid #999;
  padding-left: 45px;
  display: flex;
  gap: 9px;
  align-items: center;
}

/* watermark */
.watermark {
  position: absolute;
  left: 979px;
  top: 845px;
  width: 240px;
  color: rgba(255, 255, 255, 0.55);
  pointer-events: none;
}
.wm-top {
  display: flex;
  align-items: flex-end;
  height: 78px;
}
.wm-bai {
  font-family: "Liberation Sans", sans-serif;
  font-weight: bold;
  font-size: 53px;
  line-height: 44px;
  width: 83px;
  margin-left: -3px;
  flex: none;
  letter-spacing: -1px;
  white-space: nowrap;
}
.wm-paw {
  flex: none;
  fill: rgba(255, 255, 255, 0.55);
}
.wm-du {
  font-family: "Liberation Sans", sans-serif;
  font-size: 26px;
  font-weight: bold;
  text-anchor: middle;
  fill: #c9c9c9;
}
.wm-cn {
  font-size: 38px;
  line-height: 50px;
  font-weight: bold;
  white-space: nowrap;
  font-family: "Noto Sans CJK SC", sans-serif;
}
.wm-url {
  font-family: "Open Sans", sans-serif;
  font-size: 26.500px;
  line-height: 30px;
  margin: 1px 0 0 1px;
  white-space: nowrap;
}
</style>
